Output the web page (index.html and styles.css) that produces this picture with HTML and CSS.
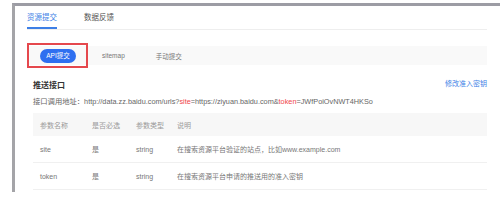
FILE: index.html
```html
<!DOCTYPE html>
<html lang="zh-CN">
<head>
    <meta charset="UTF-8">
    <title>资源提交</title>
    <link rel="stylesheet" href="styles.css">
</head>
<body>
    <div class="frame">
        <div class="tabs">
            <div class="tab active">资源提交</div>
            <div class="tab">数据反馈</div>
        </div>

        <div class="subtabs">
            <span class="pill">API提交</span>
            <span class="subtab">sitemap</span>
            <span class="subtab">手动提交</span>
            <div class="highlight"></div>
        </div>

        <div class="section">
            <div class="section-head">
                <h2>推送接口</h2>
                <a class="link" href="#">修改准入密钥</a>
            </div>
            <p class="api-url">接口调用地址：http://data.zz.baidu.com/urls?<span class="key">site</span>=https://ziyuan.baidu.com&amp;<span class="key">token</span>=JWfPoiOvNWT4HKSo</p>

            <div class="table">
                <div class="row head">
                    <div>参数名称</div>
                    <div>是否必选</div>
                    <div>参数类型</div>
                    <div>说明</div>
                </div>
                <div class="row">
                    <div>site</div>
                    <div>是</div>
                    <div>string</div>
                    <div>在搜索资源平台验证的站点，比如www.example.com</div>
                </div>
                <div class="row">
                    <div>token</div>
                    <div>是</div>
                    <div>string</div>
                    <div>在搜索资源平台申请的推送用的准入密钥</div>
                </div>
            </div>
        </div>
    </div>
</body>
</html>
```

FILE: styles.css
```css
* {
    margin: 0;
    padding: 0;
    box-sizing: border-box;
}

body {
    background-color: #ffffff;
    font-family: "Liberation Sans", "Noto Sans CJK SC", sans-serif;
    font-size: 7px;
    color: #666;
    padding: 3px 0 0 12px;
    height: 200px;
    overflow: hidden;
}

.frame {
    border-top: 3px solid #9c9ca4;
    border-left: 3px solid #a4a4a8;
    height: 189px;
    padding: 0 13px 0 12px;
}

.tabs {
    display: flex;
    gap: 27px;
    border-bottom: 1px solid #eeeeee;
}

.tab {
    padding: 6px 0 3px;
    line-height: 12px;
    font-size: 7.5px;
    color: #555;
    border-bottom: 2px solid transparent;
}

.tab.active {
    color: #3d7fe6;
    border-bottom-color: #3d7fe6;
}

.subtabs {
    position: relative;
    margin-top: 16px;
    height: 19px;
    background-color: #f9f9f9;
    display: flex;
    align-items: center;
    padding-left: 13px;
}

.pill {
    width: 36px;
    height: 14px;
    line-height: 14px;
    border-radius: 7px;
    background-color: #2f6ff0;
    color: #ffffff;
    text-align: center;
    font-size: 6.5px;
}

.subtab {
    color: #777;
    font-size: 6.5px;
}

.pill + .subtab {
    margin-left: 26px;
}

.subtab + .subtab {
    margin-left: 31px;
}

.highlight {
    position: absolute;
    left: 0;
    top: -3px;
    width: 61px;
    height: 25px;
    border: 2px solid #e5484d;
}

.section {
    padding-left: 6px;
}

.section-head {
    display: flex;
    justify-content: space-between;
    align-items: center;
    margin-top: 13px;
    height: 12px;
}

.section-head h2 {
    font-size: 8px;
    font-weight: 700;
    color: #333;
}

.link {
    color: #3d7fe6;
    text-decoration: none;
    font-size: 7px;
    margin-top: -3px;
}

.api-url {
    margin-top: 6px;
    line-height: 12px;
    font-size: 7.3px;
    color: #666;
    white-space: nowrap;
}

.key {
    color: #f0454a;
}

.table {
    margin-top: 5px;
}

.row {
    display: grid;
    grid-template-columns: 52px 44px 41px 1fr;
    height: 27px;
    align-items: center;
    border-bottom: 1px solid #f0f0f0;
    color: #777;
}

.row > div {
    padding-left: 7px;
}

.row.head {
    height: 23px;
    background-color: #f7f7f7;
    border-bottom: none;
    color: #999;
}
```
